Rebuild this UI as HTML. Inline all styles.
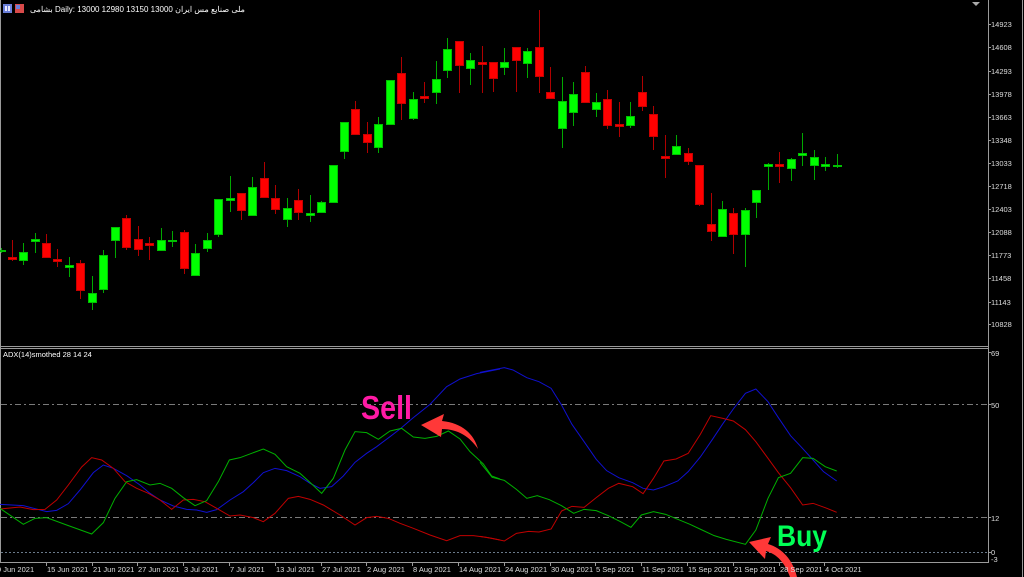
<!DOCTYPE html>
<html><head><meta charset="utf-8"><style>
html,body{margin:0;padding:0;background:#000;width:1024px;height:577px;overflow:hidden}
svg{display:block}
text{font-family:"Liberation Sans","Noto Sans CJK SC",sans-serif}
</style></head><body>
<svg id="s" width="1024" height="577" viewBox="0 0 1024 577" xmlns="http://www.w3.org/2000/svg">
<rect width="1024" height="577" fill="#000"/>
<!-- frames -->
<line x1="0.5" y1="0" x2="0.5" y2="562" stroke="#9a9a9a"/>
<line x1="988.5" y1="0" x2="988.5" y2="563" stroke="#9a9a9a"/>
<line x1="0" y1="346.5" x2="989" y2="346.5" stroke="#9a9a9a"/>
<line x1="0" y1="348.5" x2="989" y2="348.5" stroke="#9a9a9a"/>
<line x1="0" y1="562.5" x2="989" y2="562.5" stroke="#9a9a9a"/>
<line x1="1022.5" y1="0" x2="1022.5" y2="577" stroke="#9a9a9a"/>
<polygon points="972,2 980,2 976,6" fill="#aaa"/>
<!-- title -->
<rect x="3" y="4" width="9" height="9" fill="#6a7fd8"/><rect x="5" y="6" width="2" height="5" fill="#e8e8ff"/><rect x="8" y="6" width="2" height="5" fill="#e8e8ff"/>
<rect x="15" y="4" width="9" height="9" fill="#d84a4a"/><rect x="16" y="5" width="4" height="4" fill="#6a7fd8"/>
<text x="30" y="12" font-size="8" fill="#fff">بشامی Daily:  13000 12980 13150 13000   ملی صنایع مس ایران</text>
<!-- price axis -->
<g font-size="7.5" fill="#ddd" id="pax"></g>
<!-- indicator grid -->
<line x1="1" y1="404.5" x2="988" y2="404.5" stroke="#7a7a7a" stroke-dasharray="6,3,2,3"/>
<line x1="1" y1="517.5" x2="988" y2="517.5" stroke="#7a7a7a" stroke-dasharray="6,3,2,3"/>
<line x1="1" y1="552.5" x2="988" y2="552.5" stroke="#6a7a8a" stroke-dasharray="2,2"/>
<g font-size="7.5" fill="#ddd">
<text x="991" y="356">69</text><line x1="988" y1="352.5" x2="991" y2="352.5" stroke="#9a9a9a"/>
<text x="991" y="408">50</text><line x1="988" y1="404.5" x2="991" y2="404.5" stroke="#9a9a9a"/>
<text x="991" y="521">12</text><line x1="988" y1="517.5" x2="991" y2="517.5" stroke="#9a9a9a"/>
<text x="991" y="555">0</text><line x1="988" y1="552.5" x2="991" y2="552.5" stroke="#9a9a9a"/>
<text x="991" y="562">-3</text>
</g>
<text x="3" y="357" font-size="7.5" fill="#fff">ADX(14)smothed 28 14 24</text>
<g id="cd"></g>
<!-- lines -->
<g fill="none" stroke-width="1" transform="translate(0,345) scale(0.33333)">
<polyline vector-effect="non-scaling-stroke" stroke="#1010d0" points="0,478 70,482 140,500 170,496 205,476 240,435 280,383 310,360 340,370 380,392 420,420 450,445 480,465 520,483 560,493 590,495 620,502 650,494 690,465 730,440 760,413 790,383 825,370 860,377 900,395 930,415 960,430 995,425 1030,393 1065,352 1100,325 1130,305 1170,275 1200,252 1240,218 1290,178 1340,125 1380,102 1430,86 1500,72"/>
<polyline vector-effect="non-scaling-stroke" stroke="#c00000" points="0,492 60,486 100,494 135,493 170,465 205,420 245,366 275,338 305,345 340,370 375,410 410,430 445,445 480,465 515,493 550,465 580,463 615,470 650,490 690,513 720,510 760,518 790,530 825,505 865,460 895,454 930,463 970,480 1020,510 1065,540 1100,518 1130,514 1165,520 1200,535 1240,550 1290,570 1340,587 1380,572 1420,572 1460,577 1500,585"/>
<polyline vector-effect="non-scaling-stroke" stroke="#00b000" points="0,490 70,538 105,520 140,518 200,540 275,567 310,533 345,460 380,410 410,404 450,420 480,415 515,430 550,458 585,482 620,467 655,410 688,345 720,338 755,325 790,312 825,328 860,365 900,385 930,412 965,445 1000,400 1035,315 1065,260 1100,263 1135,283 1170,258 1205,250 1240,276 1275,280 1310,274 1345,258 1380,282 1410,320 1450,357 1475,393 1500,402"/>
</g>
<g fill="none" stroke-width="1" transform="translate(480,345) scale(0.34698,0.33333)">
<polyline vector-effect="non-scaling-stroke" stroke="#1010d0" points="0,82 70,68 95,75 135,98 170,110 205,130 235,180 265,238 300,290 335,343 365,377 400,398 440,413 470,430 500,435 530,425 570,408 600,380 635,336 670,283 700,236 730,192 765,145 795,132 830,170 860,218 895,272 925,305 960,345 990,380 1028,408"/>
<polyline vector-effect="non-scaling-stroke" stroke="#c00000" points="0,574 35,580 70,588 105,565 140,559 170,561 205,552 235,498 265,484 300,487 335,458 370,430 400,415 440,425 470,446 500,400 530,348 565,342 600,325 635,268 665,212 700,220 730,228 765,254 795,290 830,340 860,383 895,428 930,480 960,475 995,488 1028,502"/>
<polyline vector-effect="non-scaling-stroke" stroke="#00b000" points="0,352 35,397 70,406 105,433 135,460 165,452 200,464 235,482 270,505 300,493 335,497 370,512 405,530 435,547 465,510 500,500 535,508 570,523 605,538 640,555 675,572 710,583 765,598 795,555 830,460 860,398 895,385 930,338 960,340 995,365 1028,378"/>
</g>
<!-- annotations -->
<text x="361" y="419" font-size="33" font-weight="bold" fill="#ff1aa5" textLength="51" lengthAdjust="spacingAndGlyphs">Sell</text>
<path d="M478,449 C474,434 462,423 442,421 L444,414 L421,425 L441,437 L442,429 C458,429 470,437 478,449 Z" fill="#ff3838"/>
<text x="777" y="546" font-size="30" font-weight="bold" fill="#00ff55" textLength="50" lengthAdjust="spacingAndGlyphs">Buy</text>
<path d="M797,577 L790,577 C785,563 777,554 766,551 L765,559 L749,542 L771,537 L768,544 C782,548 793,560 797,577 Z" fill="#ff3838"/>
<!-- time axis -->
<g font-size="7.5" fill="#ddd" id="tax"></g>
</svg>
<script>
var ns="http://www.w3.org/2000/svg";
function el(p,t,a,txt){var e=document.createElementNS(ns,t);for(var k in a)e.setAttribute(k,a[k]);if(txt)e.textContent=txt;p.appendChild(e);return e;}
var pax=document.getElementById('pax');
[[14923,24],[14608,47],[14293,71],[13978,94],[13663,117],[13348,140],[13033,163],[12718,186],[12403,209],[12088,232],[11773,255],[11458,278],[11143,302],[10828,324]].forEach(function(p){
el(pax,'text',{x:991,y:p[1]+3},String(p[0]));el(pax,'line',{x1:988,y1:p[1]+.5,x2:991,y2:p[1]+.5,stroke:'#9a9a9a'});});
var tax=document.getElementById('tax');
var labs=["9 Jun 2021","15 Jun 2021","21 Jun 2021","27 Jun 2021","3 Jul 2021","7 Jul 2021","13 Jul 2021","27 Jul 2021","2 Aug 2021","8 Aug 2021","14 Aug 2021","24 Aug 2021","30 Aug 2021","5 Sep 2021","11 Sep 2021","15 Sep 2021","21 Sep 2021","28 Sep 2021","4 Oct 2021"];
labs.forEach(function(l,i){var x=Math.round(i*45.8);el(tax,'text',{x:x+(i==0?-3:1),y:572},l);if(i>0)el(tax,'line',{x1:x+.5,y1:562,x2:x+.5,y2:566,stroke:'#9a9a9a'});});
var C="g 1 250 251 248 252|r 12 257 259 240 260|g 23 252 260 243 264|g 35 239 241 233 252|r 46 243 257 234 257|r 57 259 261 249 266|g 69 265 267 257 276|r 80 263 290 260 298|g 92 293 302 276 309|g 103 255 289 250 292|g 115 227 240 227 257|r 126 218 247 215 249|r 138 239 249 226 255|r 149 243 245 237 259|g 161 240 250 228 250|g 172 240 241 231 246|r 184 232 268 230 273|g 195 253 275 244 275|g 207 240 248 233 251|g 218 199 234 199 236|g 230 198 200 176 211|r 241 193 210 193 219|g 252 187 215 177 215|r 264 178 197 162 197|r 275 198 209 185 213|g 287 208 219 198 226|r 298 200 212 189 219|g 310 213 215 195 221|g 321 202 212 201 212|g 333 165 202 165 202|g 344 122 151 122 158|r 355 109 134 101 134|r 367 134 142 122 152|g 378 124 147 117 152|g 390 80 124 80 124|r 401 73 103 57 119|g 413 99 118 92 119|r 424 96 98 82 102|g 436 79 92 61 103|g 447 49 70 38 77|r 459 41 65 41 92|g 470 60 68 53 84|r 482 62 64 46 92|r 493 62 78 62 91|g 504 62 67 48 74|r 516 47 60 47 91|g 527 51 63 48 77|r 539 47 76 10 92|r 550 92 98 67 98|g 562 101 128 77 147|g 573 94 112 82 125|r 585 72 102 66 102|g 596 102 109 93 116|r 607 99 125 90 128|r 619 124 126 102 136|g 630 116 125 102 127|r 642 92 106 76 110|r 653 114 136 106 149|r 665 156 158 135 177|g 676 146 154 135 154|r 688 153 161 148 164|r 699 165 204 165 205|r 711 224 231 193 240|g 722 209 236 201 236|r 733 213 234 208 253|g 745 210 234 208 266|g 756 190 202 190 217|g 768 164 166 163 189|r 779 164 166 152 182|g 791 159 168 158 180|g 802 153 155 133 165|g 814 157 165 150 179|g 825 164 166 157 170|g 837 165 166 154 167";
var cd=document.getElementById('cd');
C.split('|').forEach(function(s){var a=s.split(' ');var g=a[0]=='g';var x=+a[1],bt=+a[2],bb=+a[3],wt=+a[4],wb=+a[5];
el(cd,'line',{x1:x+.5,y1:wt,x2:x+.5,y2:wb+1,stroke:g?'#00a800':'#b00000'});
el(cd,'rect',{x:x-3.5,y:bt+.5,width:8,height:Math.max(1,bb-bt),fill:g?'#00ff00':'#ff0000',stroke:g?'#00c000':'#c80000','stroke-width':1});});
</script>
</body></html>
